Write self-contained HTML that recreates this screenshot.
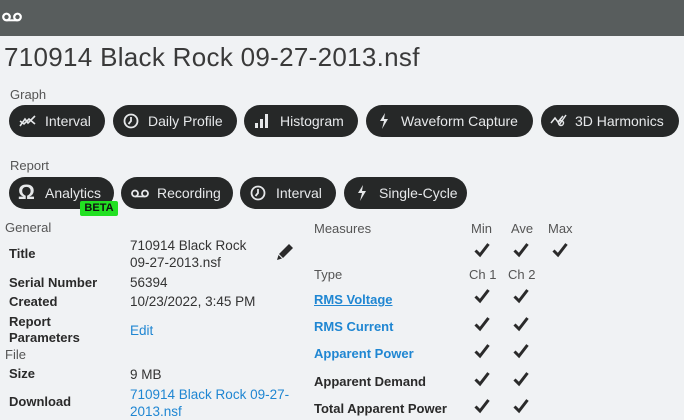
<!DOCTYPE html>
<html><head><meta charset="utf-8"><style>
*{margin:0;padding:0;box-sizing:border-box}
body{width:684px;height:416px;overflow:hidden;background:#f0f2f4;font-family:"Liberation Sans",sans-serif;color:#2a2a2a;position:relative}
.hdr{position:absolute;left:0;top:0;width:684px;height:36px;background:#585d5d}
.a{position:absolute;white-space:nowrap}
.t{font-size:26px;color:#3a3a3a;left:4px;top:42px;letter-spacing:0.3px}
.lbl{font-size:13px;color:#555}
.btn{position:absolute;height:32px;border-radius:16px;background:#262828;color:#e6e8ea;font-size:14px;line-height:32px;white-space:nowrap}
.btn svg{position:absolute;top:8px}
.btn span{position:absolute;top:0}
.k{font-size:13px;font-weight:bold;color:#2a2a2a}
.v{font-size:13.5px;color:#333;line-height:17px}
.bl{color:#1f86d2}
.mk{position:absolute;width:16px;height:16px}
</style></head><body>
<div class="hdr"><svg class="a" style="left:2px;top:12px" width="20" height="10" viewBox="0 0 20 10"><circle cx="4.5" cy="5" r="3.3" fill="none" stroke="#fff" stroke-width="2.2"/><circle cx="15.5" cy="5" r="3.3" fill="none" stroke="#fff" stroke-width="2.2"/><line x1="4.5" y1="8.3" x2="15.5" y2="8.3" stroke="#fff" stroke-width="2"/></svg></div>
<div class="a t">710914 Black Rock 09-27-2013.nsf</div>
<div class="a lbl" style="left:10px;top:87px">Graph</div>

<div class="btn" style="left:9px;top:105px;width:96px"><svg style="left:10px" width="18" height="16" viewBox="0 0 18 16"><path d="M1 13 L6 6 L9 10 L16 3 M1 8 L5 11 L10 6 L16 11" fill="none" stroke="#e6e8ea" stroke-width="1.6"/></svg><span style="left:36px">Interval</span></div>
<div class="btn" style="left:113px;top:105px;width:124px"><svg style="left:10px" width="16" height="16" viewBox="0 0 16 16"><circle cx="8" cy="8" r="6.5" fill="none" stroke="#e6e8ea" stroke-width="1.8"/><path d="M8 4 V8 L5.5 11" fill="none" stroke="#e6e8ea" stroke-width="1.8"/></svg><span style="left:35px">Daily Profile</span></div>
<div class="btn" style="left:244px;top:105px;width:114px"><svg style="left:10px" width="16" height="16" viewBox="0 0 16 16"><rect x="1" y="10" width="3" height="5" fill="#e6e8ea"/><rect x="6" y="6" width="3" height="9" fill="#e6e8ea"/><rect x="11" y="1" width="3" height="14" fill="#e6e8ea"/></svg><span style="left:36px">Histogram</span></div>
<div class="btn" style="left:366px;top:105px;width:167px"><svg style="left:12px" width="12" height="16" viewBox="0 0 12 16"><path d="M7 0 L2 8 H6 L4 16 L10 6 H6 Z" fill="#e6e8ea"/></svg><span style="left:35px">Waveform Capture</span></div>
<div class="btn" style="left:541px;top:105px;width:138px"><svg style="left:9px" width="18" height="16" viewBox="0 0 18 16"><path d="M1 10 L5 5 L8 9 L13 3 M9 12 L16 2" fill="none" stroke="#e6e8ea" stroke-width="1.5"/><circle cx="11" cy="10" r="2.5" fill="none" stroke="#e6e8ea" stroke-width="1.4"/></svg><span style="left:34px">3D Harmonics</span></div>

<div class="a lbl" style="left:10px;top:158px">Report</div>
<div class="btn" style="left:9px;top:177px;width:105px"><span style="left:9px;font-size:21px;font-weight:bold">Ω</span><span style="left:36px">Analytics</span></div>
<div class="btn" style="left:121px;top:177px;width:112px"><svg style="left:10px;top:12px" width="18" height="9" viewBox="0 0 18 9"><circle cx="4" cy="4.5" r="3" fill="none" stroke="#e6e8ea" stroke-width="1.8"/><circle cx="14" cy="4.5" r="3" fill="none" stroke="#e6e8ea" stroke-width="1.8"/><line x1="4" y1="7.5" x2="14" y2="7.5" stroke="#e6e8ea" stroke-width="1.6"/></svg><span style="left:36px">Recording</span></div>
<div class="btn" style="left:240px;top:177px;width:96px"><svg style="left:10px" width="16" height="16" viewBox="0 0 16 16"><circle cx="8" cy="8" r="6.5" fill="none" stroke="#e6e8ea" stroke-width="1.8"/><path d="M8 4 V8 L5.5 11" fill="none" stroke="#e6e8ea" stroke-width="1.8"/></svg><span style="left:36px">Interval</span></div>
<div class="btn" style="left:344px;top:177px;width:123px"><svg style="left:12px" width="12" height="16" viewBox="0 0 12 16"><path d="M7 0 L2 8 H6 L4 16 L10 6 H6 Z" fill="#e6e8ea"/></svg><span style="left:35px">Single-Cycle</span></div>
<div class="a" style="left:80px;top:201px;width:38px;height:15px;background:#22e022;border-radius:2px;font-size:11px;font-weight:bold;color:#111;text-align:center;line-height:15px">BETA</div>

<div class="a lbl" style="left:5px;top:220px">General</div>
<div class="a k" style="left:9px;top:246px">Title</div>
<div class="a v" style="left:130px;top:237px">710914 Black Rock<br>09-27-2013.nsf</div>
<svg class="a" style="left:276px;top:243px" width="18" height="18" viewBox="0 0 18 18"><path d="M13 1 L17 5 L7 15 L3 11 Z" fill="#2a2a2a"/><path d="M2.5 12 L6 15.5 L1 17 Z" fill="#2a2a2a"/></svg>
<div class="a k" style="left:9px;top:275px">Serial Number</div>
<div class="a v" style="left:130px;top:274px">56394</div>
<div class="a k" style="left:9px;top:294px">Created</div>
<div class="a v" style="left:130px;top:293px">10/23/2022, 3:45 PM</div>
<div class="a k" style="left:9px;top:314px;line-height:16px">Report<br>Parameters</div>
<div class="a v bl" style="left:130px;top:322px">Edit</div>
<div class="a lbl" style="left:5px;top:347px">File</div>
<div class="a k" style="left:9px;top:366px">Size</div>
<div class="a v" style="left:130px;top:366px">9 MB</div>
<div class="a k" style="left:9px;top:394px">Download</div>
<div class="a v bl" style="left:130px;top:386px">710914 Black Rock 09-27-<br>2013.nsf</div>

<div class="a lbl" style="left:314px;top:221px">Measures</div>
<div class="a lbl" style="left:471px;top:221px">Min</div>
<div class="a lbl" style="left:511px;top:221px">Ave</div>
<div class="a lbl" style="left:548px;top:221px">Max</div>
<div class="a lbl" style="left:314px;top:267px">Type</div>
<div class="a lbl" style="left:469px;top:267px">Ch 1</div>
<div class="a lbl" style="left:508px;top:267px">Ch 2</div>
<div class="a k bl" style="left:314px;top:292px;text-decoration:underline">RMS Voltage</div>
<div class="a k bl" style="left:314px;top:319px">RMS Current</div>
<div class="a k bl" style="left:314px;top:346px">Apparent Power</div>
<div class="a k" style="left:314px;top:374px">Apparent Demand</div>
<div class="a k" style="left:314px;top:401px">Total Apparent Power</div>

<svg width="0" height="0" style="position:absolute"><defs><symbol id="c" viewBox="0 0 16 16"><path d="M1.5 8.5 L6 13 L14.5 2" fill="none" stroke="#2a2a2a" stroke-width="3"/></symbol></defs></svg>
<svg class="mk" style="left:474px;top:242px"><use href="#c"/></svg>
<svg class="mk" style="left:513px;top:242px"><use href="#c"/></svg>
<svg class="mk" style="left:552px;top:242px"><use href="#c"/></svg>
<svg class="mk" style="left:474px;top:288px"><use href="#c"/></svg><svg class="mk" style="left:513px;top:288px"><use href="#c"/></svg>
<svg class="mk" style="left:474px;top:316px"><use href="#c"/></svg><svg class="mk" style="left:513px;top:316px"><use href="#c"/></svg>
<svg class="mk" style="left:474px;top:343px"><use href="#c"/></svg><svg class="mk" style="left:513px;top:343px"><use href="#c"/></svg>
<svg class="mk" style="left:474px;top:371px"><use href="#c"/></svg><svg class="mk" style="left:513px;top:371px"><use href="#c"/></svg>
<svg class="mk" style="left:474px;top:398px"><use href="#c"/></svg><svg class="mk" style="left:513px;top:398px"><use href="#c"/></svg>
</body></html>
